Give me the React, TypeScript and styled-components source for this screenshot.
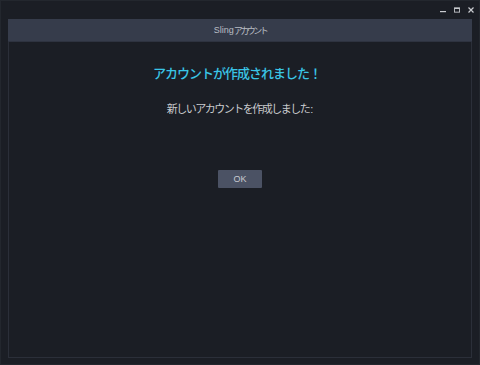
import React from "react";
import styled, { createGlobalStyle } from "styled-components";

const GlobalStyle = createGlobalStyle`
    html, body {
        margin: 0;
        padding: 0;
        background: #1b1e25;
    }
`;

const Window = styled.div`
    width: 480px;
    height: 365px;
    box-sizing: border-box;
    background: #1b1e25;
    border: 1px solid #23272e;
    display: flex;
    flex-direction: column;
    font-family: "Liberation Sans", "Noto Sans CJK JP", sans-serif;
`;

const TitleBar = styled.div`
    height: 18px;
    display: flex;
    justify-content: flex-end;
    align-items: center;
    gap: 8px;
    padding-right: 5px;
`;

const Ctrl = styled.div`
    width: 6px;
    height: 6px;
    display: flex;
    align-items: center;
    justify-content: center;
`;

const Body = styled.div`
    flex: 1;
    display: flex;
    padding: 0 7px 6px 7px;
`;

const Panel = styled.div`
    flex: 1;
    display: flex;
    flex-direction: column;
    border: 1px solid #2b2f39;
    border-top: none;
`;

const Header = styled.div`
    height: 22px;
    background: #363c4b;
    border-bottom: 1px solid #2e3340;
    margin: 0 -1px;
    display: flex;
    align-items: center;
    justify-content: center;
    color: #b9bcc4;
    font-size: 9px;
`;

const Kana = styled.span<{ sp: number }>`
    letter-spacing: ${props => props.sp}px;
`;

const Content = styled.div`
    display: flex;
    flex-direction: column;
    align-items: center;
    padding-top: 23px;
`;

const Heading = styled.div`
    color: #3ac5e6;
    font-size: 13px;
    font-weight: 500;
    letter-spacing: -1px;
    line-height: 18px;
    margin-left: -6px;
`;

const Message = styled.div`
    margin-top: 19px;
    color: #c9cacd;
    font-size: 11px;
    letter-spacing: -1.5px;
    line-height: 14px;
`;

const Colon = styled.span`
    letter-spacing: 0;
    margin-left: 1px;
`;

const OkButton = styled.button`
    margin-top: 54px;
    width: 44px;
    height: 18px;
    border: none;
    border-radius: 1px;
    background: #4b5264;
    color: #c8cad0;
    font-family: "Liberation Sans", sans-serif;
    font-size: 9px;
    padding: 0;
`;

export default function App() {
    return (
        <>
            <GlobalStyle />
            <Window>
                <TitleBar>
                    <Ctrl>
                        <svg width="6" height="6" viewBox="0 0 6 6">
                            <rect x="0" y="4" width="6" height="1.2" fill="#c9cbd0" />
                        </svg>
                    </Ctrl>
                    <Ctrl>
                        <svg width="7" height="6" viewBox="0 0 7 6">
                            <rect x="0.5" y="0.5" width="6" height="5" fill="none" stroke="#c9cbd0" />
                            <rect x="0.5" y="0.5" width="6" height="1.3" fill="#c9cbd0" />
                        </svg>
                    </Ctrl>
                    <Ctrl>
                        <svg width="6" height="6" viewBox="0 0 6 6">
                            <path d="M0.5 0.5 L5.5 5.5 M5.5 0.5 L0.5 5.5" stroke="#c9cbd0" strokeWidth="1.2" />
                        </svg>
                    </Ctrl>
                </TitleBar>
                <Body>
                    <Panel>
                        <Header>
                            Sling<Kana sp={-2.5}>アカウント</Kana>
                        </Header>
                        <Content>
                            <Heading>アカウントが作成されました！</Heading>
                            <Message>
                                新しいアカウントを作成しました<Colon>:</Colon>
                            </Message>
                            <OkButton>OK</OkButton>
                        </Content>
                    </Panel>
                </Body>
            </Window>
        </>
    );
}
